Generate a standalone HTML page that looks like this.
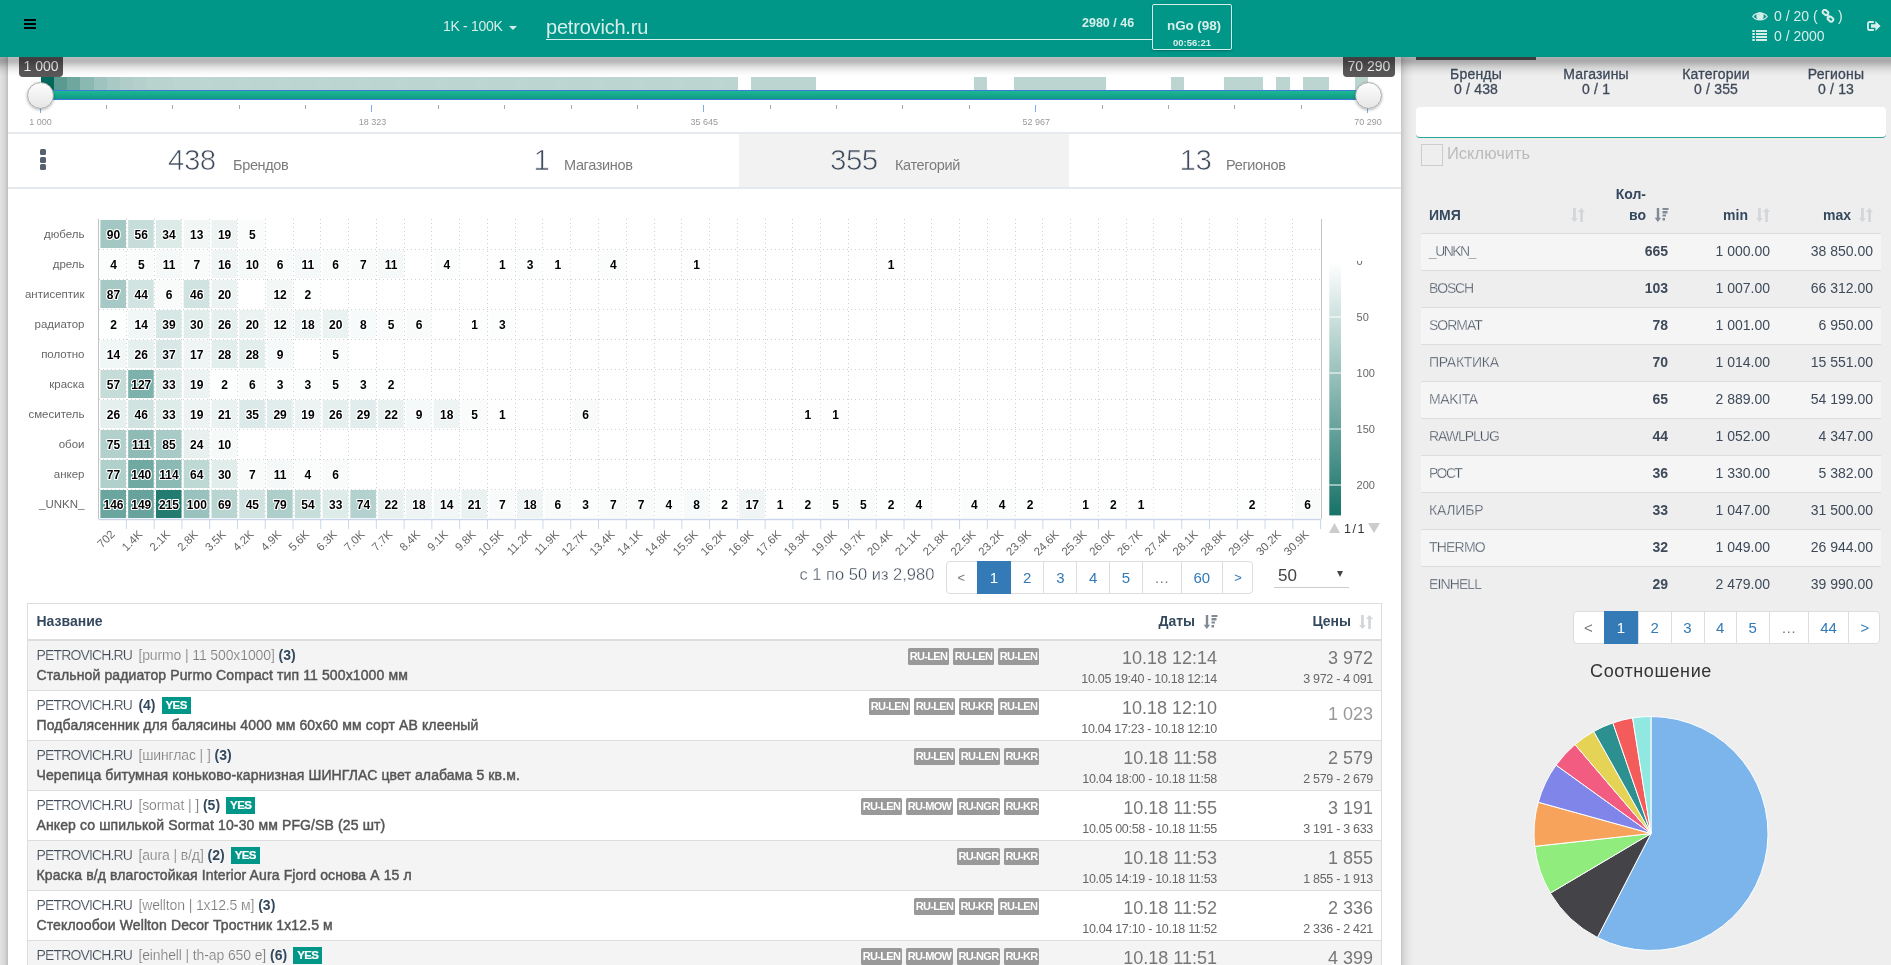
<!DOCTYPE html><html><head><meta charset="utf-8"><title>petrovich</title><style>
*{box-sizing:border-box;margin:0;padding:0}
html,body{width:1891px;height:965px;overflow:hidden}
body{font-family:"Liberation Sans",sans-serif;background:#eee;position:relative;color:#34495e}
.abs{position:absolute}
.nowrap{white-space:nowrap}
#leftstrip{position:absolute;left:0;top:0;width:8px;height:965px;background:linear-gradient(to right,#e2e2e2 0%,#d6d6d6 60%,#bdbdbd 100%)}
#main{position:absolute;left:8px;top:57px;width:1393px;height:908px;background:#fff;overflow:hidden;will-change:transform}
#side{position:absolute;left:1401px;top:57px;width:490px;height:908px;background:#eee;overflow:hidden;will-change:transform}
#sideshadow{position:absolute;left:0;top:0;width:13px;height:908px;background:linear-gradient(to right,#c6c6c6,#dcdcdc 30%,#e9e9e9 70%,#eee)}
#header{position:absolute;left:0;top:0;width:1891px;height:57px;background:#009688;z-index:10;will-change:transform}
#hshadow{position:absolute;left:0;top:57px;width:1891px;height:20px;z-index:9;background:linear-gradient(to bottom,rgba(0,0,0,0.26) 0px,rgba(0,0,0,0.29) 3px,rgba(0,0,0,0.27) 5px,rgba(0,0,0,0.18) 8px,rgba(0,0,0,0.10) 11px,rgba(0,0,0,0.035) 15px,rgba(0,0,0,0) 19px)}
.hw{color:#d6eee9}
</style></head><body>
<div id="leftstrip"></div>
<div id="header">
<div class="abs" style="left:24px;top:19px;width:12px;height:10px"><div class="abs" style="left:0;top:0;width:12px;height:2px;background:#000"></div><div class="abs" style="left:0;top:4px;width:12px;height:2px;background:#000"></div><div class="abs" style="left:0;top:8px;width:12px;height:2px;background:#000"></div></div>
<div class="abs nowrap hw" style="left:443px;top:18px;font-size:14px;line-height:17px;letter-spacing:-0.3px">1K - 100K</div>
<div class="abs" style="left:509px;top:26px;width:0;height:0;border-left:4px solid transparent;border-right:4px solid transparent;border-top:4px solid #d6eee9"></div>
<div class="abs nowrap hw" style="left:546px;top:15px;font-size:20px;line-height:24px;letter-spacing:-0.2px">petrovich.ru</div>
<div class="abs" style="left:546px;top:39px;width:606px;height:1px;background:#d7efea"></div>
<div class="abs nowrap hw" style="left:1082px;top:16px;font-size:12.5px;line-height:14px;font-weight:bold">2980 / 46</div>
<div class="abs" style="left:1152px;top:4px;width:80px;height:46px;border:1px solid #d6eee9;border-radius:2px;box-shadow:0 1px 2px rgba(0,0,0,0.25)"></div>
<div class="abs nowrap hw" style="left:1152px;top:18px;width:80px;text-align:center;font-size:13.5px;line-height:16px;font-weight:bold;letter-spacing:-0.1px;padding-left:4px">nGo (98)</div>
<div class="abs nowrap hw" style="left:1152px;top:37px;width:80px;text-align:center;font-size:9.5px;line-height:11px;font-weight:bold">00:56:21</div>
<svg class="abs" style="left:1752px;top:11px" width="16" height="11" viewBox="0 0 16 11"><path d="M0.8 5.5 C3.5 1 12.5 1 15.2 5.5 C12.5 10 3.5 10 0.8 5.5Z" fill="none" stroke="#d6eee9" stroke-width="1.3"/><circle cx="8" cy="5" r="3.7" fill="#d6eee9"/><circle cx="6.8" cy="3.6" r="0.9" fill="#b8dcd6"/></svg>
<div class="abs nowrap hw" style="left:1774px;top:8px;font-size:14px;line-height:16px">0 / 20 ( &nbsp;&nbsp;&nbsp;<span style="margin-left:1px"></span> )</div>
<svg class="abs" style="left:1821px;top:9px" width="14" height="14" viewBox="0 0 14 14"><g fill="none" stroke="#d6eee9" stroke-width="2"><rect x="1.5" y="1.5" width="6" height="4" rx="2" transform="rotate(40 4.5 3.5)"/><rect x="6.5" y="8" width="6" height="4" rx="2" transform="rotate(40 9.5 10)"/></g><path d="M5 5 L9 9" stroke="#d6eee9" stroke-width="1.6"/></svg>
<svg class="abs" style="left:1752px;top:30px" width="16" height="12" viewBox="0 0 16 12"><g fill="#d6eee9"><rect x="0.3" y="0" width="2.5" height="2"/><rect x="4" y="0" width="11" height="2"/><rect x="0.3" y="3" width="2.5" height="2"/><rect x="4" y="3" width="11" height="2"/><rect x="0.3" y="6" width="2.5" height="2"/><rect x="4" y="6" width="11" height="2"/><rect x="0.3" y="9" width="2.5" height="2"/><rect x="4" y="9" width="11" height="2"/></g></svg>
<div class="abs nowrap hw" style="left:1774px;top:28px;font-size:14px;line-height:16px">0 / 2000</div>
<svg class="abs" style="left:1867px;top:21px" width="14" height="10" viewBox="0 0 14 10"><path d="M6.8 1 H2.6 Q1 1 1 2.6 V7.4 Q1 9 2.6 9 H6.8" fill="none" stroke="#d6eee9" stroke-width="1.8"/><path d="M4 3.3 H8.4 V0 L13.6 5 L8.4 10 V6.7 H4Z" fill="#d6eee9"/></svg>
</div>
<div id="hshadow"></div>
<div id="main">
<div class="abs" style="left:33.00px;top:20px;width:13.45px;height:13px;background:#00695c"></div>
<div class="abs" style="left:46.15px;top:20px;width:13.45px;height:13px;background:#5b9a91"></div>
<div class="abs" style="left:59.30px;top:20px;width:13.45px;height:13px;background:#6fa69e"></div>
<div class="abs" style="left:72.45px;top:20px;width:13.45px;height:13px;background:#8cb8b2"></div>
<div class="abs" style="left:85.60px;top:20px;width:13.45px;height:13px;background:#9fc3be"></div>
<div class="abs" style="left:98.75px;top:20px;width:13.45px;height:13px;background:#a9c9c5"></div>
<div class="abs" style="left:111.90px;top:20px;width:13.45px;height:13px;background:#b0cdc9"></div>
<div class="abs" style="left:125.05px;top:20px;width:13.45px;height:13px;background:#b5d0cc"></div>
<div class="abs" style="left:138.20px;top:20px;width:13.45px;height:13px;background:#b8d2ce"></div>
<div class="abs" style="left:151.35px;top:20px;width:13.45px;height:13px;background:#bad3cf"></div>
<div class="abs" style="left:164.50px;top:20px;width:13.45px;height:13px;background:#bcd5d1"></div>
<div class="abs" style="left:177.65px;top:20px;width:13.45px;height:13px;background:#bcd5d1"></div>
<div class="abs" style="left:190.80px;top:20px;width:13.45px;height:13px;background:#bed6d2"></div>
<div class="abs" style="left:203.95px;top:20px;width:13.45px;height:13px;background:#bcd5d1"></div>
<div class="abs" style="left:217.10px;top:20px;width:13.45px;height:13px;background:#bcd5d1"></div>
<div class="abs" style="left:230.25px;top:20px;width:13.45px;height:13px;background:#bed6d2"></div>
<div class="abs" style="left:243.40px;top:20px;width:13.45px;height:13px;background:#bcd5d1"></div>
<div class="abs" style="left:256.55px;top:20px;width:13.45px;height:13px;background:#bcd5d1"></div>
<div class="abs" style="left:269.70px;top:20px;width:13.45px;height:13px;background:#bed6d2"></div>
<div class="abs" style="left:282.85px;top:20px;width:13.45px;height:13px;background:#bcd5d1"></div>
<div class="abs" style="left:296.00px;top:20px;width:13.45px;height:13px;background:#bcd5d1"></div>
<div class="abs" style="left:309.15px;top:20px;width:13.45px;height:13px;background:#bed6d2"></div>
<div class="abs" style="left:322.30px;top:20px;width:13.45px;height:13px;background:#bcd5d1"></div>
<div class="abs" style="left:335.45px;top:20px;width:13.45px;height:13px;background:#bcd5d1"></div>
<div class="abs" style="left:348.60px;top:20px;width:13.45px;height:13px;background:#bed6d2"></div>
<div class="abs" style="left:361.75px;top:20px;width:13.45px;height:13px;background:#bcd5d1"></div>
<div class="abs" style="left:374.90px;top:20px;width:13.45px;height:13px;background:#bcd5d1"></div>
<div class="abs" style="left:388.05px;top:20px;width:13.45px;height:13px;background:#bed6d2"></div>
<div class="abs" style="left:401.20px;top:20px;width:13.45px;height:13px;background:#bcd5d1"></div>
<div class="abs" style="left:414.35px;top:20px;width:13.45px;height:13px;background:#bcd5d1"></div>
<div class="abs" style="left:427.50px;top:20px;width:13.45px;height:13px;background:#bed6d2"></div>
<div class="abs" style="left:440.65px;top:20px;width:13.45px;height:13px;background:#bcd5d1"></div>
<div class="abs" style="left:453.80px;top:20px;width:13.45px;height:13px;background:#bcd5d1"></div>
<div class="abs" style="left:466.95px;top:20px;width:13.45px;height:13px;background:#bed6d2"></div>
<div class="abs" style="left:480.10px;top:20px;width:13.45px;height:13px;background:#bcd5d1"></div>
<div class="abs" style="left:493.25px;top:20px;width:13.45px;height:13px;background:#bcd5d1"></div>
<div class="abs" style="left:506.40px;top:20px;width:13.45px;height:13px;background:#bed6d2"></div>
<div class="abs" style="left:519.55px;top:20px;width:13.45px;height:13px;background:#bcd5d1"></div>
<div class="abs" style="left:532.70px;top:20px;width:13.45px;height:13px;background:#bcd5d1"></div>
<div class="abs" style="left:545.85px;top:20px;width:13.45px;height:13px;background:#bed6d2"></div>
<div class="abs" style="left:559.00px;top:20px;width:13.45px;height:13px;background:#bcd5d1"></div>
<div class="abs" style="left:572.15px;top:20px;width:13.45px;height:13px;background:#bcd5d1"></div>
<div class="abs" style="left:585.30px;top:20px;width:13.45px;height:13px;background:#bed6d2"></div>
<div class="abs" style="left:598.45px;top:20px;width:13.45px;height:13px;background:#bcd5d1"></div>
<div class="abs" style="left:611.60px;top:20px;width:13.45px;height:13px;background:#bcd5d1"></div>
<div class="abs" style="left:624.75px;top:20px;width:13.45px;height:13px;background:#bed6d2"></div>
<div class="abs" style="left:637.90px;top:20px;width:13.45px;height:13px;background:#bcd5d1"></div>
<div class="abs" style="left:651.05px;top:20px;width:13.45px;height:13px;background:#bcd5d1"></div>
<div class="abs" style="left:664.20px;top:20px;width:13.45px;height:13px;background:#bed6d2"></div>
<div class="abs" style="left:677.35px;top:20px;width:13.45px;height:13px;background:#bcd5d1"></div>
<div class="abs" style="left:690.50px;top:20px;width:13.45px;height:13px;background:#bcd5d1"></div>
<div class="abs" style="left:703.65px;top:20px;width:13.45px;height:13px;background:#bed6d2"></div>
<div class="abs" style="left:716.80px;top:20px;width:13.45px;height:13px;background:#bcd5d1"></div>
<div class="abs" style="left:743px;top:20px;width:65px;height:13px;background:#bcd5d1"></div>
<div class="abs" style="left:966px;top:20px;width:13px;height:13px;background:#bcd5d1"></div>
<div class="abs" style="left:1006px;top:20px;width:92px;height:13px;background:#bcd5d1"></div>
<div class="abs" style="left:1163px;top:20px;width:13px;height:13px;background:#bcd5d1"></div>
<div class="abs" style="left:1216px;top:20px;width:39px;height:13px;background:#bcd5d1"></div>
<div class="abs" style="left:1268px;top:20px;width:14px;height:13px;background:#bcd5d1"></div>
<div class="abs" style="left:1295px;top:20px;width:26px;height:13px;background:#bcd5d1"></div>
<div class="abs" style="left:1347px;top:20px;width:13px;height:13px;background:#bcd5d1"></div>
<div class="abs" style="left:32px;top:33px;width:1328px;height:10px;border-top:1px solid #3a7ad9;border-bottom:1px solid #3a7ad9;background:linear-gradient(to bottom,#1cb894,#0f9a86)"></div>
<div class="abs" style="left:32px;top:51px;width:1px;height:5px;background:#7eaaee"></div>
<div class="abs" style="left:98px;top:48px;width:1px;height:4px;background:#a8a8a8"></div>
<div class="abs" style="left:164px;top:48px;width:1px;height:4px;background:#a8a8a8"></div>
<div class="abs" style="left:231px;top:48px;width:1px;height:4px;background:#a8a8a8"></div>
<div class="abs" style="left:297px;top:48px;width:1px;height:4px;background:#a8a8a8"></div>
<div class="abs" style="left:363px;top:48px;width:1px;height:7px;background:#7eaaee"></div>
<div class="abs" style="left:430px;top:48px;width:1px;height:4px;background:#a8a8a8"></div>
<div class="abs" style="left:496px;top:48px;width:1px;height:4px;background:#a8a8a8"></div>
<div class="abs" style="left:563px;top:48px;width:1px;height:4px;background:#a8a8a8"></div>
<div class="abs" style="left:629px;top:48px;width:1px;height:4px;background:#a8a8a8"></div>
<div class="abs" style="left:695px;top:48px;width:1px;height:7px;background:#7eaaee"></div>
<div class="abs" style="left:762px;top:48px;width:1px;height:4px;background:#a8a8a8"></div>
<div class="abs" style="left:828px;top:48px;width:1px;height:4px;background:#a8a8a8"></div>
<div class="abs" style="left:894px;top:48px;width:1px;height:4px;background:#a8a8a8"></div>
<div class="abs" style="left:961px;top:48px;width:1px;height:4px;background:#a8a8a8"></div>
<div class="abs" style="left:1027px;top:48px;width:1px;height:7px;background:#7eaaee"></div>
<div class="abs" style="left:1094px;top:48px;width:1px;height:4px;background:#a8a8a8"></div>
<div class="abs" style="left:1160px;top:48px;width:1px;height:4px;background:#a8a8a8"></div>
<div class="abs" style="left:1226px;top:48px;width:1px;height:4px;background:#a8a8a8"></div>
<div class="abs" style="left:1293px;top:48px;width:1px;height:4px;background:#a8a8a8"></div>
<div class="abs" style="left:1359px;top:51px;width:1px;height:5px;background:#7eaaee"></div>
<div class="abs nowrap" style="left:-7.5px;top:60px;width:80px;text-align:center;font-size:9px;line-height:11px;color:#999">1 000</div>
<div class="abs nowrap" style="left:324.4px;top:60px;width:80px;text-align:center;font-size:9px;line-height:11px;color:#999">18 323</div>
<div class="abs nowrap" style="left:656.3px;top:60px;width:80px;text-align:center;font-size:9px;line-height:11px;color:#999">35 645</div>
<div class="abs nowrap" style="left:988.2px;top:60px;width:80px;text-align:center;font-size:9px;line-height:11px;color:#999">52 967</div>
<div class="abs nowrap" style="left:1320.1px;top:60px;width:80px;text-align:center;font-size:9px;line-height:11px;color:#999">70 290</div>
<div class="abs" style="left:19.0px;top:24.5px;width:27px;height:27px;border-radius:50%;border:1px solid #a8a8a8;background:linear-gradient(to bottom,#fdfdfd,#e6e6e6);box-shadow:0 1px 3px rgba(0,0,0,0.3)"></div>
<div class="abs" style="left:1347.0px;top:24.5px;width:27px;height:27px;border-radius:50%;border:1px solid #a8a8a8;background:linear-gradient(to bottom,#fdfdfd,#e6e6e6);box-shadow:0 1px 3px rgba(0,0,0,0.3)"></div>
<div class="abs nowrap" style="left:11px;top:-2px;width:44px;height:22px;border-radius:0 0 4px 4px;background:#5a5858;color:#fff;font-size:14px;line-height:22px;text-align:center;z-index:3">1 000</div>
<div class="abs nowrap" style="left:1335px;top:-2px;width:52px;height:22px;border-radius:0 0 4px 4px;background:#5a5858;color:#fff;font-size:14px;line-height:22px;text-align:center;z-index:3">70 290</div>
<div class="abs" style="left:0;top:75px;width:1393px;height:2px;background:#e6eaee"></div>
<div class="abs" style="left:0;top:130px;width:1393px;height:2px;background:#e6eaee"></div>
<div class="abs" style="left:731px;top:77px;width:330px;height:53px;background:#f2f2f2"></div>
<div class="abs" style="left:32px;top:92.0px;width:6px;height:6px;border-radius:1.5px;background:#56606e"></div>
<div class="abs" style="left:32px;top:99.6px;width:6px;height:6px;border-radius:1.5px;background:#56606e"></div>
<div class="abs" style="left:32px;top:107.2px;width:6px;height:6px;border-radius:1.5px;background:#56606e"></div>
<div class="abs nowrap" style="left:160px;top:86px;font-size:29.5px;line-height:34px;color:#3f4b5c;letter-spacing:-0.5px;-webkit-text-stroke:0.7px #fff">438</div>
<div class="abs nowrap" style="left:225px;top:100px;font-size:14.5px;line-height:17px;color:#7b7b7b;letter-spacing:-0.35px">Брендов</div>
<div class="abs nowrap" style="left:525.5px;top:86px;font-size:29.5px;line-height:34px;color:#3f4b5c;letter-spacing:-0.5px;-webkit-text-stroke:0.7px #fff">1</div>
<div class="abs nowrap" style="left:556px;top:100px;font-size:14.5px;line-height:17px;color:#7b7b7b;letter-spacing:-0.35px">Магазинов</div>
<div class="abs nowrap" style="left:822px;top:86px;font-size:29.5px;line-height:34px;color:#3f4b5c;letter-spacing:-0.5px;-webkit-text-stroke:0.7px #f2f2f2">355</div>
<div class="abs nowrap" style="left:887px;top:100px;font-size:14.5px;line-height:17px;color:#7b7b7b;letter-spacing:-0.35px">Категорий</div>
<div class="abs nowrap" style="left:1171.5px;top:86px;font-size:29.5px;line-height:34px;color:#3f4b5c;letter-spacing:-0.5px;-webkit-text-stroke:0.7px #fff">13</div>
<div class="abs nowrap" style="left:1218px;top:100px;font-size:14.5px;line-height:17px;color:#7b7b7b;letter-spacing:-0.35px">Регионов</div>
<svg class="abs" style="left:-8px;top:-57px" width="1400" height="965" viewBox="0 0 1400 965">
<path d="M126.5 219.0 V519.0 M154.5 219.0 V519.0 M181.5 219.0 V519.0 M209.5 219.0 V519.0 M237.5 219.0 V519.0 M265.5 219.0 V519.0 M293.5 219.0 V519.0 M320.5 219.0 V519.0 M348.5 219.0 V519.0 M376.5 219.0 V519.0 M404.5 219.0 V519.0 M431.5 219.0 V519.0 M459.5 219.0 V519.0 M487.5 219.0 V519.0 M515.5 219.0 V519.0 M542.5 219.0 V519.0 M570.5 219.0 V519.0 M598.5 219.0 V519.0 M626.5 219.0 V519.0 M654.5 219.0 V519.0 M681.5 219.0 V519.0 M709.5 219.0 V519.0 M737.5 219.0 V519.0 M765.5 219.0 V519.0 M792.5 219.0 V519.0 M820.5 219.0 V519.0 M848.5 219.0 V519.0 M876.5 219.0 V519.0 M904.5 219.0 V519.0 M931.5 219.0 V519.0 M959.5 219.0 V519.0 M987.5 219.0 V519.0 M1015.5 219.0 V519.0 M1042.5 219.0 V519.0 M1070.5 219.0 V519.0 M1098.5 219.0 V519.0 M1126.5 219.0 V519.0 M1153.5 219.0 V519.0 M1181.5 219.0 V519.0 M1209.5 219.0 V519.0 M1237.5 219.0 V519.0 M1265.5 219.0 V519.0 M1292.5 219.0 V519.0 M99 249.5 H1320.6 M99 279.5 H1320.6 M99 309.5 H1320.6 M99 339.5 H1320.6 M99 369.5 H1320.6 M99 399.5 H1320.6 M99 429.5 H1320.6 M99 459.5 H1320.6 M99 489.5 H1320.6" stroke="#d0d0d0" stroke-width="1" stroke-dasharray="1,3" fill="none" shape-rendering="crispEdges"/>
<rect x="100.40" y="220.00" width="25.57" height="28.00" fill="#a3c8c3"/>
<rect x="128.17" y="220.00" width="25.57" height="28.00" fill="#c6ddda"/>
<rect x="155.95" y="220.00" width="25.57" height="28.00" fill="#dceae8"/>
<rect x="183.72" y="220.00" width="25.57" height="28.00" fill="#f2f7f6"/>
<rect x="211.49" y="220.00" width="25.57" height="28.00" fill="#ecf3f2"/>
<rect x="239.26" y="220.00" width="25.57" height="28.00" fill="#fafcfc"/>
<rect x="100.40" y="250.00" width="25.57" height="28.00" fill="#fbfdfc"/>
<rect x="128.17" y="250.00" width="25.57" height="28.00" fill="#fafcfc"/>
<rect x="155.95" y="250.00" width="25.57" height="28.00" fill="#f4f8f8"/>
<rect x="183.72" y="250.00" width="25.57" height="28.00" fill="#f8fbfa"/>
<rect x="211.49" y="250.00" width="25.57" height="28.00" fill="#eff5f4"/>
<rect x="239.26" y="250.00" width="25.57" height="28.00" fill="#f5f9f8"/>
<rect x="267.04" y="250.00" width="25.57" height="28.00" fill="#f9fbfb"/>
<rect x="294.81" y="250.00" width="25.57" height="28.00" fill="#f4f8f8"/>
<rect x="322.58" y="250.00" width="25.57" height="28.00" fill="#f9fbfb"/>
<rect x="350.35" y="250.00" width="25.57" height="28.00" fill="#f8fbfa"/>
<rect x="378.13" y="250.00" width="25.57" height="28.00" fill="#f4f8f8"/>
<rect x="433.67" y="250.00" width="25.57" height="28.00" fill="#fbfdfc"/>
<rect x="489.22" y="250.00" width="25.57" height="28.00" fill="#fefefe"/>
<rect x="516.99" y="250.00" width="25.57" height="28.00" fill="#fcfdfd"/>
<rect x="544.76" y="250.00" width="25.57" height="28.00" fill="#fefefe"/>
<rect x="600.31" y="250.00" width="25.57" height="28.00" fill="#fbfdfc"/>
<rect x="683.63" y="250.00" width="25.57" height="28.00" fill="#fefefe"/>
<rect x="878.04" y="250.00" width="25.57" height="28.00" fill="#fefefe"/>
<rect x="100.40" y="280.00" width="25.57" height="28.00" fill="#a6c9c5"/>
<rect x="128.17" y="280.00" width="25.57" height="28.00" fill="#d2e4e2"/>
<rect x="155.95" y="280.00" width="25.57" height="28.00" fill="#f9fbfb"/>
<rect x="183.72" y="280.00" width="25.57" height="28.00" fill="#d0e3e0"/>
<rect x="211.49" y="280.00" width="25.57" height="28.00" fill="#ebf3f2"/>
<rect x="267.04" y="280.00" width="25.57" height="28.00" fill="#f3f8f7"/>
<rect x="294.81" y="280.00" width="25.57" height="28.00" fill="#fdfefe"/>
<rect x="100.40" y="310.00" width="25.57" height="28.00" fill="#fdfefe"/>
<rect x="128.17" y="310.00" width="25.57" height="28.00" fill="#f1f6f6"/>
<rect x="155.95" y="310.00" width="25.57" height="28.00" fill="#d7e7e5"/>
<rect x="183.72" y="310.00" width="25.57" height="28.00" fill="#e0edeb"/>
<rect x="211.49" y="310.00" width="25.57" height="28.00" fill="#e4efee"/>
<rect x="239.26" y="310.00" width="25.57" height="28.00" fill="#ebf3f2"/>
<rect x="267.04" y="310.00" width="25.57" height="28.00" fill="#f3f8f7"/>
<rect x="294.81" y="310.00" width="25.57" height="28.00" fill="#edf4f3"/>
<rect x="322.58" y="310.00" width="25.57" height="28.00" fill="#ebf3f2"/>
<rect x="350.35" y="310.00" width="25.57" height="28.00" fill="#f7fafa"/>
<rect x="378.13" y="310.00" width="25.57" height="28.00" fill="#fafcfc"/>
<rect x="405.90" y="310.00" width="25.57" height="28.00" fill="#f9fbfb"/>
<rect x="461.45" y="310.00" width="25.57" height="28.00" fill="#fefefe"/>
<rect x="489.22" y="310.00" width="25.57" height="28.00" fill="#fcfdfd"/>
<rect x="100.40" y="340.00" width="25.57" height="28.00" fill="#f1f6f6"/>
<rect x="128.17" y="340.00" width="25.57" height="28.00" fill="#e4efee"/>
<rect x="155.95" y="340.00" width="25.57" height="28.00" fill="#d9e8e6"/>
<rect x="183.72" y="340.00" width="25.57" height="28.00" fill="#eef5f4"/>
<rect x="211.49" y="340.00" width="25.57" height="28.00" fill="#e2eeec"/>
<rect x="239.26" y="340.00" width="25.57" height="28.00" fill="#e2eeec"/>
<rect x="267.04" y="340.00" width="25.57" height="28.00" fill="#f6f9f9"/>
<rect x="322.58" y="340.00" width="25.57" height="28.00" fill="#fafcfc"/>
<rect x="100.40" y="370.00" width="25.57" height="28.00" fill="#c5dcd9"/>
<rect x="128.17" y="370.00" width="25.57" height="28.00" fill="#7db1ab"/>
<rect x="155.95" y="370.00" width="25.57" height="28.00" fill="#ddebe9"/>
<rect x="183.72" y="370.00" width="25.57" height="28.00" fill="#ecf3f2"/>
<rect x="211.49" y="370.00" width="25.57" height="28.00" fill="#fdfefe"/>
<rect x="239.26" y="370.00" width="25.57" height="28.00" fill="#f9fbfb"/>
<rect x="267.04" y="370.00" width="25.57" height="28.00" fill="#fcfdfd"/>
<rect x="294.81" y="370.00" width="25.57" height="28.00" fill="#fcfdfd"/>
<rect x="322.58" y="370.00" width="25.57" height="28.00" fill="#fafcfc"/>
<rect x="350.35" y="370.00" width="25.57" height="28.00" fill="#fcfdfd"/>
<rect x="378.13" y="370.00" width="25.57" height="28.00" fill="#fdfefe"/>
<rect x="100.40" y="400.00" width="25.57" height="28.00" fill="#e4efee"/>
<rect x="128.17" y="400.00" width="25.57" height="28.00" fill="#d0e3e0"/>
<rect x="155.95" y="400.00" width="25.57" height="28.00" fill="#ddebe9"/>
<rect x="183.72" y="400.00" width="25.57" height="28.00" fill="#ecf3f2"/>
<rect x="211.49" y="400.00" width="25.57" height="28.00" fill="#eaf2f1"/>
<rect x="239.26" y="400.00" width="25.57" height="28.00" fill="#dbe9e8"/>
<rect x="267.04" y="400.00" width="25.57" height="28.00" fill="#e1edec"/>
<rect x="294.81" y="400.00" width="25.57" height="28.00" fill="#ecf3f2"/>
<rect x="322.58" y="400.00" width="25.57" height="28.00" fill="#e4efee"/>
<rect x="350.35" y="400.00" width="25.57" height="28.00" fill="#e1edec"/>
<rect x="378.13" y="400.00" width="25.57" height="28.00" fill="#e9f1f0"/>
<rect x="405.90" y="400.00" width="25.57" height="28.00" fill="#f6f9f9"/>
<rect x="433.67" y="400.00" width="25.57" height="28.00" fill="#edf4f3"/>
<rect x="461.45" y="400.00" width="25.57" height="28.00" fill="#fafcfc"/>
<rect x="489.22" y="400.00" width="25.57" height="28.00" fill="#fefefe"/>
<rect x="572.54" y="400.00" width="25.57" height="28.00" fill="#f9fbfb"/>
<rect x="794.72" y="400.00" width="25.57" height="28.00" fill="#fefefe"/>
<rect x="822.49" y="400.00" width="25.57" height="28.00" fill="#fefefe"/>
<rect x="100.40" y="430.00" width="25.57" height="28.00" fill="#b2d1cd"/>
<rect x="128.17" y="430.00" width="25.57" height="28.00" fill="#8ebbb5"/>
<rect x="155.95" y="430.00" width="25.57" height="28.00" fill="#a8cbc7"/>
<rect x="183.72" y="430.00" width="25.57" height="28.00" fill="#e7f0ef"/>
<rect x="211.49" y="430.00" width="25.57" height="28.00" fill="#f5f9f8"/>
<rect x="100.40" y="460.00" width="25.57" height="28.00" fill="#b0d0cc"/>
<rect x="128.17" y="460.00" width="25.57" height="28.00" fill="#70a9a2"/>
<rect x="155.95" y="460.00" width="25.57" height="28.00" fill="#8bb9b3"/>
<rect x="183.72" y="460.00" width="25.57" height="28.00" fill="#bed8d4"/>
<rect x="211.49" y="460.00" width="25.57" height="28.00" fill="#e0edeb"/>
<rect x="239.26" y="460.00" width="25.57" height="28.00" fill="#f8fbfa"/>
<rect x="267.04" y="460.00" width="25.57" height="28.00" fill="#f4f8f8"/>
<rect x="294.81" y="460.00" width="25.57" height="28.00" fill="#fbfdfc"/>
<rect x="322.58" y="460.00" width="25.57" height="28.00" fill="#f9fbfb"/>
<rect x="100.40" y="490.00" width="25.57" height="28.00" fill="#6aa59e"/>
<rect x="128.17" y="490.00" width="25.57" height="28.00" fill="#67a39c"/>
<rect x="155.95" y="490.00" width="25.57" height="28.00" fill="#247b70"/>
<rect x="183.72" y="490.00" width="25.57" height="28.00" fill="#99c1bd"/>
<rect x="211.49" y="490.00" width="25.57" height="28.00" fill="#b9d5d1"/>
<rect x="239.26" y="490.00" width="25.57" height="28.00" fill="#d1e3e1"/>
<rect x="267.04" y="490.00" width="25.57" height="28.00" fill="#aececb"/>
<rect x="294.81" y="490.00" width="25.57" height="28.00" fill="#c8dedb"/>
<rect x="322.58" y="490.00" width="25.57" height="28.00" fill="#ddebe9"/>
<rect x="350.35" y="490.00" width="25.57" height="28.00" fill="#b3d1ce"/>
<rect x="378.13" y="490.00" width="25.57" height="28.00" fill="#e9f1f0"/>
<rect x="405.90" y="490.00" width="25.57" height="28.00" fill="#edf4f3"/>
<rect x="433.67" y="490.00" width="25.57" height="28.00" fill="#f1f6f6"/>
<rect x="461.45" y="490.00" width="25.57" height="28.00" fill="#eaf2f1"/>
<rect x="489.22" y="490.00" width="25.57" height="28.00" fill="#f8fbfa"/>
<rect x="516.99" y="490.00" width="25.57" height="28.00" fill="#edf4f3"/>
<rect x="544.76" y="490.00" width="25.57" height="28.00" fill="#f9fbfb"/>
<rect x="572.54" y="490.00" width="25.57" height="28.00" fill="#fcfdfd"/>
<rect x="600.31" y="490.00" width="25.57" height="28.00" fill="#f8fbfa"/>
<rect x="628.08" y="490.00" width="25.57" height="28.00" fill="#f8fbfa"/>
<rect x="655.85" y="490.00" width="25.57" height="28.00" fill="#fbfdfc"/>
<rect x="683.63" y="490.00" width="25.57" height="28.00" fill="#f7fafa"/>
<rect x="711.40" y="490.00" width="25.57" height="28.00" fill="#fdfefe"/>
<rect x="739.17" y="490.00" width="25.57" height="28.00" fill="#eef5f4"/>
<rect x="766.95" y="490.00" width="25.57" height="28.00" fill="#fefefe"/>
<rect x="794.72" y="490.00" width="25.57" height="28.00" fill="#fdfefe"/>
<rect x="822.49" y="490.00" width="25.57" height="28.00" fill="#fafcfc"/>
<rect x="850.26" y="490.00" width="25.57" height="28.00" fill="#fafcfc"/>
<rect x="878.04" y="490.00" width="25.57" height="28.00" fill="#fdfefe"/>
<rect x="905.81" y="490.00" width="25.57" height="28.00" fill="#fbfdfc"/>
<rect x="961.35" y="490.00" width="25.57" height="28.00" fill="#fbfdfc"/>
<rect x="989.13" y="490.00" width="25.57" height="28.00" fill="#fbfdfc"/>
<rect x="1016.90" y="490.00" width="25.57" height="28.00" fill="#fdfefe"/>
<rect x="1072.45" y="490.00" width="25.57" height="28.00" fill="#fefefe"/>
<rect x="1100.22" y="490.00" width="25.57" height="28.00" fill="#fdfefe"/>
<rect x="1127.99" y="490.00" width="25.57" height="28.00" fill="#fefefe"/>
<rect x="1239.08" y="490.00" width="25.57" height="28.00" fill="#fdfefe"/>
<rect x="1294.63" y="490.00" width="25.57" height="28.00" fill="#f9fbfb"/>
<path d="M98.5 219.0 V519.0" stroke="#c4c4c4" stroke-width="1" shape-rendering="crispEdges"/>
<path d="M1321.5 219.0 V519.0" stroke="#c4c4c4" stroke-width="1" shape-rendering="crispEdges"/>
<path d="M98.6 519.5 H1320.6" stroke="#ccd6eb" stroke-width="1.5"/>
<path d="M126.37 519.0 V529.0 M154.15 519.0 V529.0 M181.92 519.0 V529.0 M209.69 519.0 V529.0 M237.46 519.0 V529.0 M265.24 519.0 V529.0 M293.01 519.0 V529.0 M320.78 519.0 V529.0 M348.55 519.0 V529.0 M376.33 519.0 V529.0 M404.10 519.0 V529.0 M431.87 519.0 V529.0 M459.65 519.0 V529.0 M487.42 519.0 V529.0 M515.19 519.0 V529.0 M542.96 519.0 V529.0 M570.74 519.0 V529.0 M598.51 519.0 V529.0 M626.28 519.0 V529.0 M654.05 519.0 V529.0 M681.83 519.0 V529.0 M709.60 519.0 V529.0 M737.37 519.0 V529.0 M765.15 519.0 V529.0 M792.92 519.0 V529.0 M820.69 519.0 V529.0 M848.46 519.0 V529.0 M876.24 519.0 V529.0 M904.01 519.0 V529.0 M931.78 519.0 V529.0 M959.55 519.0 V529.0 M987.33 519.0 V529.0 M1015.10 519.0 V529.0 M1042.87 519.0 V529.0 M1070.65 519.0 V529.0 M1098.42 519.0 V529.0 M1126.19 519.0 V529.0 M1153.96 519.0 V529.0 M1181.74 519.0 V529.0 M1209.51 519.0 V529.0 M1237.28 519.0 V529.0 M1265.05 519.0 V529.0 M1292.83 519.0 V529.0 M1320.60 519.0 V529.0" stroke="#ccd6eb" stroke-width="1"/>
<g font-family="Liberation Sans" font-size="12" font-weight="bold" text-anchor="middle" fill="#000" stroke="#fff" stroke-width="2.2" stroke-linejoin="round" paint-order="stroke">
<text x="113.49" y="238.60">90</text>
<text x="141.26" y="238.60">56</text>
<text x="169.03" y="238.60">34</text>
<text x="196.80" y="238.60">13</text>
<text x="224.58" y="238.60">19</text>
<text x="252.35" y="238.60">5</text>
<text x="113.49" y="268.60">4</text>
<text x="141.26" y="268.60">5</text>
<text x="169.03" y="268.60">11</text>
<text x="196.80" y="268.60">7</text>
<text x="224.58" y="268.60">16</text>
<text x="252.35" y="268.60">10</text>
<text x="280.12" y="268.60">6</text>
<text x="307.90" y="268.60">11</text>
<text x="335.67" y="268.60">6</text>
<text x="363.44" y="268.60">7</text>
<text x="391.21" y="268.60">11</text>
<text x="446.76" y="268.60">4</text>
<text x="502.30" y="268.60">1</text>
<text x="530.08" y="268.60">3</text>
<text x="557.85" y="268.60">1</text>
<text x="613.40" y="268.60">4</text>
<text x="696.71" y="268.60">1</text>
<text x="891.12" y="268.60">1</text>
<text x="113.49" y="298.60">87</text>
<text x="141.26" y="298.60">44</text>
<text x="169.03" y="298.60">6</text>
<text x="196.80" y="298.60">46</text>
<text x="224.58" y="298.60">20</text>
<text x="280.12" y="298.60">12</text>
<text x="307.90" y="298.60">2</text>
<text x="113.49" y="328.60">2</text>
<text x="141.26" y="328.60">14</text>
<text x="169.03" y="328.60">39</text>
<text x="196.80" y="328.60">30</text>
<text x="224.58" y="328.60">26</text>
<text x="252.35" y="328.60">20</text>
<text x="280.12" y="328.60">12</text>
<text x="307.90" y="328.60">18</text>
<text x="335.67" y="328.60">20</text>
<text x="363.44" y="328.60">8</text>
<text x="391.21" y="328.60">5</text>
<text x="418.99" y="328.60">6</text>
<text x="474.53" y="328.60">1</text>
<text x="502.30" y="328.60">3</text>
<text x="113.49" y="358.60">14</text>
<text x="141.26" y="358.60">26</text>
<text x="169.03" y="358.60">37</text>
<text x="196.80" y="358.60">17</text>
<text x="224.58" y="358.60">28</text>
<text x="252.35" y="358.60">28</text>
<text x="280.12" y="358.60">9</text>
<text x="335.67" y="358.60">5</text>
<text x="113.49" y="388.60">57</text>
<text x="141.26" y="388.60">127</text>
<text x="169.03" y="388.60">33</text>
<text x="196.80" y="388.60">19</text>
<text x="224.58" y="388.60">2</text>
<text x="252.35" y="388.60">6</text>
<text x="280.12" y="388.60">3</text>
<text x="307.90" y="388.60">3</text>
<text x="335.67" y="388.60">5</text>
<text x="363.44" y="388.60">3</text>
<text x="391.21" y="388.60">2</text>
<text x="113.49" y="418.60">26</text>
<text x="141.26" y="418.60">46</text>
<text x="169.03" y="418.60">33</text>
<text x="196.80" y="418.60">19</text>
<text x="224.58" y="418.60">21</text>
<text x="252.35" y="418.60">35</text>
<text x="280.12" y="418.60">29</text>
<text x="307.90" y="418.60">19</text>
<text x="335.67" y="418.60">26</text>
<text x="363.44" y="418.60">29</text>
<text x="391.21" y="418.60">22</text>
<text x="418.99" y="418.60">9</text>
<text x="446.76" y="418.60">18</text>
<text x="474.53" y="418.60">5</text>
<text x="502.30" y="418.60">1</text>
<text x="585.62" y="418.60">6</text>
<text x="807.80" y="418.60">1</text>
<text x="835.58" y="418.60">1</text>
<text x="113.49" y="448.60">75</text>
<text x="141.26" y="448.60">111</text>
<text x="169.03" y="448.60">85</text>
<text x="196.80" y="448.60">24</text>
<text x="224.58" y="448.60">10</text>
<text x="113.49" y="478.60">77</text>
<text x="141.26" y="478.60">140</text>
<text x="169.03" y="478.60">114</text>
<text x="196.80" y="478.60">64</text>
<text x="224.58" y="478.60">30</text>
<text x="252.35" y="478.60">7</text>
<text x="280.12" y="478.60">11</text>
<text x="307.90" y="478.60">4</text>
<text x="335.67" y="478.60">6</text>
<text x="113.49" y="508.60">146</text>
<text x="141.26" y="508.60">149</text>
<text x="169.03" y="508.60">215</text>
<text x="196.80" y="508.60">100</text>
<text x="224.58" y="508.60">69</text>
<text x="252.35" y="508.60">45</text>
<text x="280.12" y="508.60">79</text>
<text x="307.90" y="508.60">54</text>
<text x="335.67" y="508.60">33</text>
<text x="363.44" y="508.60">74</text>
<text x="391.21" y="508.60">22</text>
<text x="418.99" y="508.60">18</text>
<text x="446.76" y="508.60">14</text>
<text x="474.53" y="508.60">21</text>
<text x="502.30" y="508.60">7</text>
<text x="530.08" y="508.60">18</text>
<text x="557.85" y="508.60">6</text>
<text x="585.62" y="508.60">3</text>
<text x="613.40" y="508.60">7</text>
<text x="641.17" y="508.60">7</text>
<text x="668.94" y="508.60">4</text>
<text x="696.71" y="508.60">8</text>
<text x="724.49" y="508.60">2</text>
<text x="752.26" y="508.60">17</text>
<text x="780.03" y="508.60">1</text>
<text x="807.80" y="508.60">2</text>
<text x="835.58" y="508.60">5</text>
<text x="863.35" y="508.60">5</text>
<text x="891.12" y="508.60">2</text>
<text x="918.90" y="508.60">4</text>
<text x="974.44" y="508.60">4</text>
<text x="1002.21" y="508.60">4</text>
<text x="1029.99" y="508.60">2</text>
<text x="1085.53" y="508.60">1</text>
<text x="1113.30" y="508.60">2</text>
<text x="1141.08" y="508.60">1</text>
<text x="1252.17" y="508.60">2</text>
<text x="1307.71" y="508.60">6</text>
</g>
<g font-family="Liberation Sans" font-size="11.5" fill="#666" text-anchor="end">
<text x="84.5" y="238.00">дюбель</text>
<text x="84.5" y="268.00">дрель</text>
<text x="84.5" y="298.00">антисептик</text>
<text x="84.5" y="328.00">радиатор</text>
<text x="84.5" y="358.00">полотно</text>
<text x="84.5" y="388.00">краска</text>
<text x="84.5" y="418.00">смеситель</text>
<text x="84.5" y="448.00">обои</text>
<text x="84.5" y="478.00">анкер</text>
<text x="84.5" y="508.00">_UNKN_</text>
</g>
<g font-family="Liberation Sans" font-size="11.5" fill="#666" text-anchor="end">
<text transform="translate(115.49 535) rotate(-45)">702</text>
<text transform="translate(143.26 535) rotate(-45)">1.4K</text>
<text transform="translate(171.03 535) rotate(-45)">2.1K</text>
<text transform="translate(198.80 535) rotate(-45)">2.8K</text>
<text transform="translate(226.58 535) rotate(-45)">3.5K</text>
<text transform="translate(254.35 535) rotate(-45)">4.2K</text>
<text transform="translate(282.12 535) rotate(-45)">4.9K</text>
<text transform="translate(309.90 535) rotate(-45)">5.6K</text>
<text transform="translate(337.67 535) rotate(-45)">6.3K</text>
<text transform="translate(365.44 535) rotate(-45)">7.0K</text>
<text transform="translate(393.21 535) rotate(-45)">7.7K</text>
<text transform="translate(420.99 535) rotate(-45)">8.4K</text>
<text transform="translate(448.76 535) rotate(-45)">9.1K</text>
<text transform="translate(476.53 535) rotate(-45)">9.8K</text>
<text transform="translate(504.30 535) rotate(-45)">10.5K</text>
<text transform="translate(532.08 535) rotate(-45)">11.2K</text>
<text transform="translate(559.85 535) rotate(-45)">11.9K</text>
<text transform="translate(587.62 535) rotate(-45)">12.7K</text>
<text transform="translate(615.40 535) rotate(-45)">13.4K</text>
<text transform="translate(643.17 535) rotate(-45)">14.1K</text>
<text transform="translate(670.94 535) rotate(-45)">14.8K</text>
<text transform="translate(698.71 535) rotate(-45)">15.5K</text>
<text transform="translate(726.49 535) rotate(-45)">16.2K</text>
<text transform="translate(754.26 535) rotate(-45)">16.9K</text>
<text transform="translate(782.03 535) rotate(-45)">17.6K</text>
<text transform="translate(809.80 535) rotate(-45)">18.3K</text>
<text transform="translate(837.58 535) rotate(-45)">19.0K</text>
<text transform="translate(865.35 535) rotate(-45)">19.7K</text>
<text transform="translate(893.12 535) rotate(-45)">20.4K</text>
<text transform="translate(920.90 535) rotate(-45)">21.1K</text>
<text transform="translate(948.67 535) rotate(-45)">21.8K</text>
<text transform="translate(976.44 535) rotate(-45)">22.5K</text>
<text transform="translate(1004.21 535) rotate(-45)">23.2K</text>
<text transform="translate(1031.99 535) rotate(-45)">23.9K</text>
<text transform="translate(1059.76 535) rotate(-45)">24.6K</text>
<text transform="translate(1087.53 535) rotate(-45)">25.3K</text>
<text transform="translate(1115.30 535) rotate(-45)">26.0K</text>
<text transform="translate(1143.08 535) rotate(-45)">26.7K</text>
<text transform="translate(1170.85 535) rotate(-45)">27.4K</text>
<text transform="translate(1198.62 535) rotate(-45)">28.1K</text>
<text transform="translate(1226.40 535) rotate(-45)">28.8K</text>
<text transform="translate(1254.17 535) rotate(-45)">29.5K</text>
<text transform="translate(1281.94 535) rotate(-45)">30.2K</text>
<text transform="translate(1309.71 535) rotate(-45)">30.9K</text>
</g>
<defs><linearGradient id="lg" x1="0" y1="0" x2="0" y2="1"><stop offset="0" stop-color="#ffffff"/><stop offset="1" stop-color="#177368"/></linearGradient></defs>
<rect x="1329.3" y="262" width="11.7" height="253.4" fill="url(#lg)"/>
<path d="M1329.3 317 H1341" stroke="#fff" stroke-width="1"/>
<path d="M1329.3 373 H1341" stroke="#fff" stroke-width="1"/>
<path d="M1329.3 429 H1341" stroke="#fff" stroke-width="1"/>
<path d="M1329.3 485 H1341" stroke="#fff" stroke-width="1"/>
<g font-family="Liberation Sans" font-size="11" fill="#666">
<text x="1356.6" y="321">50</text>
<text x="1356.6" y="377">100</text>
<text x="1356.6" y="433">150</text>
<text x="1356.6" y="489">200</text>
</g>
<defs><clipPath id="c0"><rect x="1340" y="261" width="40" height="20"/></clipPath></defs>
<text x="1356.6" y="265" font-family="Liberation Sans" font-size="11" fill="#666" clip-path="url(#c0)">0</text>
<path d="M1329 533 L1334.5 523 L1340 533Z" fill="#ccc"/>
<text x="1344" y="533" font-family="Liberation Sans" font-size="12.5" fill="#333" letter-spacing="1.6">1/1</text>
<path d="M1368 523 L1374 533 L1380 523Z" fill="#ccc"/>
</svg>
<div class="abs nowrap" style="left:791.5px;top:507px;font-size:16.5px;line-height:20px;color:#3a4555;letter-spacing:0px;-webkit-text-stroke:0.35px #fff">с 1 по 50 из 2,980</div>
<div class="abs" style="left:937.6px;top:504.29999999999995px;width:307.80000000000007px;height:33px;border:1px solid #ddd;border-radius:4px;background:#fff"></div>
<div class="abs nowrap" style="left:937.6px;top:504.29999999999995px;width:31.4px;height:33px;color:#777;font-size:13px;line-height:33px;text-align:center">&lt;</div>
<div class="abs nowrap" style="left:969.0px;top:504.29999999999995px;width:33.8px;height:33px;background:#337ab7;color:#fff;font-size:15px;line-height:33px;text-align:center">1</div>
<div class="abs nowrap" style="left:1002.8px;top:504.29999999999995px;width:32.6px;height:33px;color:#337ab7;font-size:15px;line-height:33px;text-align:center">2</div>
<div class="abs nowrap" style="left:1035.4px;top:504.29999999999995px;width:32.9px;height:33px;border-left:1px solid #ddd;color:#337ab7;font-size:15px;line-height:33px;text-align:center">3</div>
<div class="abs nowrap" style="left:1068.3px;top:504.29999999999995px;width:32.9px;height:33px;border-left:1px solid #ddd;color:#337ab7;font-size:15px;line-height:33px;text-align:center">4</div>
<div class="abs nowrap" style="left:1101.2px;top:504.29999999999995px;width:32.4px;height:33px;border-left:1px solid #ddd;color:#337ab7;font-size:15px;line-height:33px;text-align:center">5</div>
<div class="abs nowrap" style="left:1133.6px;top:504.29999999999995px;width:39.2px;height:33px;border-left:1px solid #ddd;color:#777;font-size:15px;line-height:33px;text-align:center">…</div>
<div class="abs nowrap" style="left:1172.8px;top:504.29999999999995px;width:40.9px;height:33px;border-left:1px solid #ddd;color:#337ab7;font-size:15px;line-height:33px;text-align:center">60</div>
<div class="abs nowrap" style="left:1213.7px;top:504.29999999999995px;width:31.7px;height:33px;border-left:1px solid #ddd;color:#337ab7;font-size:13px;line-height:33px;text-align:center">&gt;</div>
<div class="abs nowrap" style="left:1270px;top:509px;font-size:17px;line-height:20px;color:#444">50</div>
<div class="abs" style="left:1329px;top:514px;width:0;height:0;border-left:3px solid transparent;border-right:3px solid transparent;border-top:6px solid #444"></div>
<div class="abs" style="left:1266px;top:530px;width:75px;height:1px;background:#ccc"></div>
<div class="abs" style="left:19.0px;top:546.0px;width:1355.0px;height:367.0px;border:1px solid #ddd;border-bottom:none;background:#fff"></div>
<div class="abs" style="left:19.0px;top:582.2px;width:1354.4px;height:2px;background:#ddd"></div>
<div class="abs nowrap" style="left:28.5px;top:556.0px;font-size:14px;line-height:17px;font-weight:bold;color:#34495e">Название</div>
<div class="abs nowrap" style="left:1092.0px;top:556.0px;width:95px;text-align:right;font-size:14px;line-height:17px;font-weight:bold;color:#34495e">Даты</div>
<div class="abs nowrap" style="left:1242.0px;top:556.0px;width:101px;text-align:right;font-size:14px;line-height:17px;font-weight:bold;color:#34495e">Цены</div>
<svg class="abs" style="left:1194.5px;top:558.0px;" width="16" height="15" viewBox="0 0 16 15"><g fill="#7f8a96"><rect x="2.8" y="0" width="2.4" height="10.5"/><path d="M0.7 9.8 L7.1 9.8 L3.9 14Z"/><rect x="8.5" y="0" width="6" height="2"/><rect x="8.5" y="3" width="5" height="2.5"/><rect x="8.5" y="6.5" width="3.5" height="2"/><rect x="8.5" y="10" width="2.5" height="2.5"/></g></svg>
<svg class="abs" style="left:1351.0px;top:558.0px;" width="16" height="15" viewBox="0 0 16 15"><g fill="#d3d6da"><rect x="2" y="0" width="2.8" height="10.5"/><path d="M0 10 L6.9 10 L3.45 14Z"/><rect x="9.2" y="3.5" width="2.7" height="10.5"/><path d="M6.9 4 L14 4 L10.45 0Z"/></g></svg>
<div class="abs" style="left:20.0px;top:584.0px;width:1353.4px;height:49px;background:#f4f4f4"></div>
<div class="abs" style="left:20.0px;top:633.0px;width:1353.4px;height:1px;background:#ddd"></div>
<div class="abs nowrap" style="left:28.5px;top:590.0px;font-size:14px;line-height:17px;color:#3e4856;-webkit-text-stroke:0.2px #f4f4f4"><span style="letter-spacing:-0.85px">PETROVICH.RU</span><span style="margin-left:-1.5px">&nbsp; </span><span style="color:#7c7c7c;letter-spacing:-0.12px">[purmo | 11 500x1000]</span> <b style="color:#34495e;-webkit-text-stroke:0">(3)</b></div>
<div class="abs nowrap" style="left:28.5px;top:610.0px;font-size:14px;line-height:17px;color:#555;-webkit-text-stroke:0.45px #555;letter-spacing:0.12px">Стальной радиатор Purmo Compact тип 11 500x1000 мм</div>
<div class="abs nowrap" style="left:990.0px;top:591.0px;width:41px;height:17px;background:#999;border-radius:1.5px;color:#fff;font-weight:bold;font-size:11px;line-height:17px;text-align:center;letter-spacing:-0.7px">RU-LEN</div>
<div class="abs nowrap" style="left:945.0px;top:591.0px;width:41px;height:17px;background:#999;border-radius:1.5px;color:#fff;font-weight:bold;font-size:11px;line-height:17px;text-align:center;letter-spacing:-0.7px">RU-LEN</div>
<div class="abs nowrap" style="left:900.0px;top:591.0px;width:41px;height:17px;background:#999;border-radius:1.5px;color:#fff;font-weight:bold;font-size:11px;line-height:17px;text-align:center;letter-spacing:-0.7px">RU-LEN</div>
<div class="abs nowrap" style="left:1009.0px;top:591.0px;width:200px;text-align:right;font-size:18px;line-height:21px;color:#777">10.18 12:14</div>
<div class="abs nowrap" style="left:1009.0px;top:615.0px;width:200px;text-align:right;font-size:12.5px;line-height:15px;color:#666;letter-spacing:-0.3px">10.05 19:40 - 10.18 12:14</div>
<div class="abs nowrap" style="left:1165.0px;top:591.0px;width:200px;text-align:right;font-size:18px;line-height:21px;color:#777">3 972</div>
<div class="abs nowrap" style="left:1165.0px;top:615.0px;width:200px;text-align:right;font-size:12.5px;line-height:15px;color:#666;letter-spacing:-0.3px">3 972 - 4 091</div>
<div class="abs" style="left:20.0px;top:634.0px;width:1353.4px;height:49px;background:#fff"></div>
<div class="abs" style="left:20.0px;top:683.0px;width:1353.4px;height:1px;background:#ddd"></div>
<div class="abs nowrap" style="left:28.5px;top:640.0px;font-size:14px;line-height:17px;color:#3e4856;-webkit-text-stroke:0.2px #fff"><span style="letter-spacing:-0.85px">PETROVICH.RU</span><span style="margin-left:-1.5px">&nbsp; </span><b style="color:#34495e;-webkit-text-stroke:0">(4)</b><span style="display:inline-block;vertical-align:1px;margin-left:6px;background:#009688;color:#fff;font-weight:bold;font-size:11.5px;line-height:17px;height:17px;padding:0 4px;letter-spacing:-0.6px">YES</span></div>
<div class="abs nowrap" style="left:28.5px;top:660.0px;font-size:14px;line-height:17px;color:#555;-webkit-text-stroke:0.45px #555;letter-spacing:0.12px">Подбалясенник для балясины 4000 мм 60x60 мм сорт АВ клееный</div>
<div class="abs nowrap" style="left:990.0px;top:641.0px;width:41px;height:17px;background:#999;border-radius:1.5px;color:#fff;font-weight:bold;font-size:11px;line-height:17px;text-align:center;letter-spacing:-0.7px">RU-LEN</div>
<div class="abs nowrap" style="left:951.0px;top:641.0px;width:35px;height:17px;background:#999;border-radius:1.5px;color:#fff;font-weight:bold;font-size:11px;line-height:17px;text-align:center;letter-spacing:-0.7px">RU-KR</div>
<div class="abs nowrap" style="left:906.0px;top:641.0px;width:41px;height:17px;background:#999;border-radius:1.5px;color:#fff;font-weight:bold;font-size:11px;line-height:17px;text-align:center;letter-spacing:-0.7px">RU-LEN</div>
<div class="abs nowrap" style="left:861.0px;top:641.0px;width:41px;height:17px;background:#999;border-radius:1.5px;color:#fff;font-weight:bold;font-size:11px;line-height:17px;text-align:center;letter-spacing:-0.7px">RU-LEN</div>
<div class="abs nowrap" style="left:1009.0px;top:641.0px;width:200px;text-align:right;font-size:18px;line-height:21px;color:#777">10.18 12:10</div>
<div class="abs nowrap" style="left:1009.0px;top:665.0px;width:200px;text-align:right;font-size:12.5px;line-height:15px;color:#666;letter-spacing:-0.3px">10.04 17:23 - 10.18 12:10</div>
<div class="abs nowrap" style="left:1165.0px;top:647.0px;width:200px;text-align:right;font-size:18px;line-height:21px;color:#999">1 023</div>
<div class="abs" style="left:20.0px;top:684.0px;width:1353.4px;height:49px;background:#f4f4f4"></div>
<div class="abs" style="left:20.0px;top:733.0px;width:1353.4px;height:1px;background:#ddd"></div>
<div class="abs nowrap" style="left:28.5px;top:690.0px;font-size:14px;line-height:17px;color:#3e4856;-webkit-text-stroke:0.2px #f4f4f4"><span style="letter-spacing:-0.85px">PETROVICH.RU</span><span style="margin-left:-1.5px">&nbsp; </span><span style="color:#7c7c7c;letter-spacing:-0.12px">[шинглас | ]</span> <b style="color:#34495e;-webkit-text-stroke:0">(3)</b></div>
<div class="abs nowrap" style="left:28.5px;top:710.0px;font-size:14px;line-height:17px;color:#555;-webkit-text-stroke:0.45px #555;letter-spacing:0.12px">Черепица битумная коньково-карнизная ШИНГЛАС цвет алабама 5 кв.м.</div>
<div class="abs nowrap" style="left:996.0px;top:691.0px;width:35px;height:17px;background:#999;border-radius:1.5px;color:#fff;font-weight:bold;font-size:11px;line-height:17px;text-align:center;letter-spacing:-0.7px">RU-KR</div>
<div class="abs nowrap" style="left:951.0px;top:691.0px;width:41px;height:17px;background:#999;border-radius:1.5px;color:#fff;font-weight:bold;font-size:11px;line-height:17px;text-align:center;letter-spacing:-0.7px">RU-LEN</div>
<div class="abs nowrap" style="left:906.0px;top:691.0px;width:41px;height:17px;background:#999;border-radius:1.5px;color:#fff;font-weight:bold;font-size:11px;line-height:17px;text-align:center;letter-spacing:-0.7px">RU-LEN</div>
<div class="abs nowrap" style="left:1009.0px;top:691.0px;width:200px;text-align:right;font-size:18px;line-height:21px;color:#777">10.18 11:58</div>
<div class="abs nowrap" style="left:1009.0px;top:715.0px;width:200px;text-align:right;font-size:12.5px;line-height:15px;color:#666;letter-spacing:-0.3px">10.04 18:00 - 10.18 11:58</div>
<div class="abs nowrap" style="left:1165.0px;top:691.0px;width:200px;text-align:right;font-size:18px;line-height:21px;color:#777">2 579</div>
<div class="abs nowrap" style="left:1165.0px;top:715.0px;width:200px;text-align:right;font-size:12.5px;line-height:15px;color:#666;letter-spacing:-0.3px">2 579 - 2 679</div>
<div class="abs" style="left:20.0px;top:734.0px;width:1353.4px;height:49px;background:#fff"></div>
<div class="abs" style="left:20.0px;top:783.0px;width:1353.4px;height:1px;background:#ddd"></div>
<div class="abs nowrap" style="left:28.5px;top:740.0px;font-size:14px;line-height:17px;color:#3e4856;-webkit-text-stroke:0.2px #fff"><span style="letter-spacing:-0.85px">PETROVICH.RU</span><span style="margin-left:-1.5px">&nbsp; </span><span style="color:#7c7c7c;letter-spacing:-0.12px">[sormat | ]</span> <b style="color:#34495e;-webkit-text-stroke:0">(5)</b><span style="display:inline-block;vertical-align:1px;margin-left:6px;background:#009688;color:#fff;font-weight:bold;font-size:11.5px;line-height:17px;height:17px;padding:0 4px;letter-spacing:-0.6px">YES</span></div>
<div class="abs nowrap" style="left:28.5px;top:760.0px;font-size:14px;line-height:17px;color:#555;-webkit-text-stroke:0.45px #555;letter-spacing:0.12px">Анкер со шпилькой Sormat 10-30 мм PFG/SB (25 шт)</div>
<div class="abs nowrap" style="left:996.0px;top:741.0px;width:35px;height:17px;background:#999;border-radius:1.5px;color:#fff;font-weight:bold;font-size:11px;line-height:17px;text-align:center;letter-spacing:-0.7px">RU-KR</div>
<div class="abs nowrap" style="left:949.0px;top:741.0px;width:43px;height:17px;background:#999;border-radius:1.5px;color:#fff;font-weight:bold;font-size:11px;line-height:17px;text-align:center;letter-spacing:-0.7px">RU-NGR</div>
<div class="abs nowrap" style="left:898.0px;top:741.0px;width:47px;height:17px;background:#999;border-radius:1.5px;color:#fff;font-weight:bold;font-size:11px;line-height:17px;text-align:center;letter-spacing:-0.7px">RU-MOW</div>
<div class="abs nowrap" style="left:853.0px;top:741.0px;width:41px;height:17px;background:#999;border-radius:1.5px;color:#fff;font-weight:bold;font-size:11px;line-height:17px;text-align:center;letter-spacing:-0.7px">RU-LEN</div>
<div class="abs nowrap" style="left:1009.0px;top:741.0px;width:200px;text-align:right;font-size:18px;line-height:21px;color:#777">10.18 11:55</div>
<div class="abs nowrap" style="left:1009.0px;top:765.0px;width:200px;text-align:right;font-size:12.5px;line-height:15px;color:#666;letter-spacing:-0.3px">10.05 00:58 - 10.18 11:55</div>
<div class="abs nowrap" style="left:1165.0px;top:741.0px;width:200px;text-align:right;font-size:18px;line-height:21px;color:#777">3 191</div>
<div class="abs nowrap" style="left:1165.0px;top:765.0px;width:200px;text-align:right;font-size:12.5px;line-height:15px;color:#666;letter-spacing:-0.3px">3 191 - 3 633</div>
<div class="abs" style="left:20.0px;top:784.0px;width:1353.4px;height:49px;background:#f4f4f4"></div>
<div class="abs" style="left:20.0px;top:833.0px;width:1353.4px;height:1px;background:#ddd"></div>
<div class="abs nowrap" style="left:28.5px;top:790.0px;font-size:14px;line-height:17px;color:#3e4856;-webkit-text-stroke:0.2px #f4f4f4"><span style="letter-spacing:-0.85px">PETROVICH.RU</span><span style="margin-left:-1.5px">&nbsp; </span><span style="color:#7c7c7c;letter-spacing:-0.12px">[aura | в/д]</span> <b style="color:#34495e;-webkit-text-stroke:0">(2)</b><span style="display:inline-block;vertical-align:1px;margin-left:6px;background:#009688;color:#fff;font-weight:bold;font-size:11.5px;line-height:17px;height:17px;padding:0 4px;letter-spacing:-0.6px">YES</span></div>
<div class="abs nowrap" style="left:28.5px;top:810.0px;font-size:14px;line-height:17px;color:#555;-webkit-text-stroke:0.45px #555;letter-spacing:0.12px">Краска в/д влагостойкая Interior Aura Fjord основа А 15 л</div>
<div class="abs nowrap" style="left:996.0px;top:791.0px;width:35px;height:17px;background:#999;border-radius:1.5px;color:#fff;font-weight:bold;font-size:11px;line-height:17px;text-align:center;letter-spacing:-0.7px">RU-KR</div>
<div class="abs nowrap" style="left:949.0px;top:791.0px;width:43px;height:17px;background:#999;border-radius:1.5px;color:#fff;font-weight:bold;font-size:11px;line-height:17px;text-align:center;letter-spacing:-0.7px">RU-NGR</div>
<div class="abs nowrap" style="left:1009.0px;top:791.0px;width:200px;text-align:right;font-size:18px;line-height:21px;color:#777">10.18 11:53</div>
<div class="abs nowrap" style="left:1009.0px;top:815.0px;width:200px;text-align:right;font-size:12.5px;line-height:15px;color:#666;letter-spacing:-0.3px">10.05 14:19 - 10.18 11:53</div>
<div class="abs nowrap" style="left:1165.0px;top:791.0px;width:200px;text-align:right;font-size:18px;line-height:21px;color:#777">1 855</div>
<div class="abs nowrap" style="left:1165.0px;top:815.0px;width:200px;text-align:right;font-size:12.5px;line-height:15px;color:#666;letter-spacing:-0.3px">1 855 - 1 913</div>
<div class="abs" style="left:20.0px;top:834.0px;width:1353.4px;height:49px;background:#fff"></div>
<div class="abs" style="left:20.0px;top:883.0px;width:1353.4px;height:1px;background:#ddd"></div>
<div class="abs nowrap" style="left:28.5px;top:840.0px;font-size:14px;line-height:17px;color:#3e4856;-webkit-text-stroke:0.2px #fff"><span style="letter-spacing:-0.85px">PETROVICH.RU</span><span style="margin-left:-1.5px">&nbsp; </span><span style="color:#7c7c7c;letter-spacing:-0.12px">[wellton | 1x12.5 м]</span> <b style="color:#34495e;-webkit-text-stroke:0">(3)</b></div>
<div class="abs nowrap" style="left:28.5px;top:860.0px;font-size:14px;line-height:17px;color:#555;-webkit-text-stroke:0.45px #555;letter-spacing:0.12px">Стеклообои Wellton Decor Тростник 1x12.5 м</div>
<div class="abs nowrap" style="left:990.0px;top:841.0px;width:41px;height:17px;background:#999;border-radius:1.5px;color:#fff;font-weight:bold;font-size:11px;line-height:17px;text-align:center;letter-spacing:-0.7px">RU-LEN</div>
<div class="abs nowrap" style="left:951.0px;top:841.0px;width:35px;height:17px;background:#999;border-radius:1.5px;color:#fff;font-weight:bold;font-size:11px;line-height:17px;text-align:center;letter-spacing:-0.7px">RU-KR</div>
<div class="abs nowrap" style="left:906.0px;top:841.0px;width:41px;height:17px;background:#999;border-radius:1.5px;color:#fff;font-weight:bold;font-size:11px;line-height:17px;text-align:center;letter-spacing:-0.7px">RU-LEN</div>
<div class="abs nowrap" style="left:1009.0px;top:841.0px;width:200px;text-align:right;font-size:18px;line-height:21px;color:#777">10.18 11:52</div>
<div class="abs nowrap" style="left:1009.0px;top:865.0px;width:200px;text-align:right;font-size:12.5px;line-height:15px;color:#666;letter-spacing:-0.3px">10.04 17:10 - 10.18 11:52</div>
<div class="abs nowrap" style="left:1165.0px;top:841.0px;width:200px;text-align:right;font-size:18px;line-height:21px;color:#777">2 336</div>
<div class="abs nowrap" style="left:1165.0px;top:865.0px;width:200px;text-align:right;font-size:12.5px;line-height:15px;color:#666;letter-spacing:-0.3px">2 336 - 2 421</div>
<div class="abs" style="left:20.0px;top:884.0px;width:1353.4px;height:49px;background:#f4f4f4"></div>
<div class="abs" style="left:20.0px;top:933.0px;width:1353.4px;height:1px;background:#ddd"></div>
<div class="abs nowrap" style="left:28.5px;top:890.0px;font-size:14px;line-height:17px;color:#3e4856;-webkit-text-stroke:0.2px #f4f4f4"><span style="letter-spacing:-0.85px">PETROVICH.RU</span><span style="margin-left:-1.5px">&nbsp; </span><span style="color:#7c7c7c;letter-spacing:-0.12px">[einhell | th-ap 650 e]</span> <b style="color:#34495e;-webkit-text-stroke:0">(6)</b><span style="display:inline-block;vertical-align:1px;margin-left:6px;background:#009688;color:#fff;font-weight:bold;font-size:11.5px;line-height:17px;height:17px;padding:0 4px;letter-spacing:-0.6px">YES</span></div>
<div class="abs nowrap" style="left:28.5px;top:910.0px;font-size:14px;line-height:17px;color:#555;-webkit-text-stroke:0.45px #555;letter-spacing:0.12px">Насос садовый Einhell TH-AP 650 E</div>
<div class="abs nowrap" style="left:996.0px;top:891.0px;width:35px;height:17px;background:#999;border-radius:1.5px;color:#fff;font-weight:bold;font-size:11px;line-height:17px;text-align:center;letter-spacing:-0.7px">RU-KR</div>
<div class="abs nowrap" style="left:949.0px;top:891.0px;width:43px;height:17px;background:#999;border-radius:1.5px;color:#fff;font-weight:bold;font-size:11px;line-height:17px;text-align:center;letter-spacing:-0.7px">RU-NGR</div>
<div class="abs nowrap" style="left:898.0px;top:891.0px;width:47px;height:17px;background:#999;border-radius:1.5px;color:#fff;font-weight:bold;font-size:11px;line-height:17px;text-align:center;letter-spacing:-0.7px">RU-MOW</div>
<div class="abs nowrap" style="left:853.0px;top:891.0px;width:41px;height:17px;background:#999;border-radius:1.5px;color:#fff;font-weight:bold;font-size:11px;line-height:17px;text-align:center;letter-spacing:-0.7px">RU-LEN</div>
<div class="abs nowrap" style="left:1009.0px;top:891.0px;width:200px;text-align:right;font-size:18px;line-height:21px;color:#777">10.18 11:51</div>
<div class="abs nowrap" style="left:1009.0px;top:915.0px;width:200px;text-align:right;font-size:12.5px;line-height:15px;color:#666;letter-spacing:-0.3px">10.05 10:00 - 10.18 11:51</div>
<div class="abs nowrap" style="left:1165.0px;top:891.0px;width:200px;text-align:right;font-size:18px;line-height:21px;color:#777">4 399</div>
<div class="abs nowrap" style="left:1165.0px;top:915.0px;width:200px;text-align:right;font-size:12.5px;line-height:15px;color:#666;letter-spacing:-0.3px">4 399 - 4 500</div>
</div>
<div id="side"><div id="sideshadow"></div>
<div class="abs" style="left:15.0px;top:0.0px;width:120px;height:3px;background:#555"></div>
<div class="abs nowrap" style="left:15.0px;top:10.0px;width:120px;text-align:center;font-size:14px;line-height:15px;color:#3e4a5a;-webkit-text-stroke:0.3px #3e4a5a;letter-spacing:0.2px">Бренды<br>0 / 438</div>
<div class="abs nowrap" style="left:135.0px;top:10.0px;width:120px;text-align:center;font-size:14px;line-height:15px;color:#3e4a5a;-webkit-text-stroke:0.3px #3e4a5a;letter-spacing:0.2px">Магазины<br>0 / 1</div>
<div class="abs nowrap" style="left:255.0px;top:10.0px;width:120px;text-align:center;font-size:14px;line-height:15px;color:#3e4a5a;-webkit-text-stroke:0.3px #3e4a5a;letter-spacing:0.2px">Категории<br>0 / 355</div>
<div class="abs nowrap" style="left:375.0px;top:10.0px;width:120px;text-align:center;font-size:14px;line-height:15px;color:#3e4a5a;-webkit-text-stroke:0.3px #3e4a5a;letter-spacing:0.2px">Регионы<br>0 / 13</div>
<div class="abs" style="left:15.0px;top:50.0px;width:470px;height:31px;background:#fff;border-radius:4px;border-bottom:1.5px solid #26a69a"></div>
<div class="abs" style="left:20.0px;top:87.0px;width:22px;height:22px;border:1px solid #ccc;background:#eee"></div>
<div class="abs nowrap" style="left:46.0px;top:86.0px;font-size:16.5px;line-height:20px;color:#bbb">Исключить</div>
<div class="abs nowrap" style="left:28.0px;top:150.0px;font-size:14px;line-height:16px;font-weight:bold;color:#34495e">ИМЯ</div>
<div class="abs nowrap" style="left:195.0px;top:129.0px;width:50px;text-align:right;font-size:14px;line-height:16px;font-weight:bold;color:#34495e">Кол-</div>
<div class="abs nowrap" style="left:199.0px;top:150.0px;width:46px;text-align:right;font-size:14px;line-height:16px;font-weight:bold;color:#34495e">во</div>
<div class="abs nowrap" style="left:299.0px;top:150.0px;width:48px;text-align:right;font-size:14px;line-height:16px;font-weight:bold;color:#34495e">min</div>
<div class="abs nowrap" style="left:399.0px;top:150.0px;width:51px;text-align:right;font-size:14px;line-height:16px;font-weight:bold;color:#34495e">max</div>
<svg class="abs" style="left:170.0px;top:151.0px;" width="16" height="15" viewBox="0 0 16 15"><g fill="#d3d6da"><rect x="2" y="0" width="2.8" height="10.5"/><path d="M0 10 L6.9 10 L3.45 14Z"/><rect x="9.2" y="3.5" width="2.7" height="10.5"/><path d="M6.9 4 L14 4 L10.45 0Z"/></g></svg>
<svg class="abs" style="left:252.5px;top:151.0px;" width="16" height="15" viewBox="0 0 16 15"><g fill="#7f8a96"><rect x="2.8" y="0" width="2.4" height="10.5"/><path d="M0.7 9.8 L7.1 9.8 L3.9 14Z"/><rect x="8.5" y="0" width="6" height="2"/><rect x="8.5" y="3" width="5" height="2.5"/><rect x="8.5" y="6.5" width="3.5" height="2"/><rect x="8.5" y="10" width="2.5" height="2.5"/></g></svg>
<svg class="abs" style="left:355.0px;top:151.0px;" width="16" height="15" viewBox="0 0 16 15"><g fill="#d3d6da"><rect x="2" y="0" width="2.8" height="10.5"/><path d="M0 10 L6.9 10 L3.45 14Z"/><rect x="9.2" y="3.5" width="2.7" height="10.5"/><path d="M6.9 4 L14 4 L10.45 0Z"/></g></svg>
<svg class="abs" style="left:458.0px;top:151.0px;" width="16" height="15" viewBox="0 0 16 15"><g fill="#d3d6da"><rect x="2" y="0" width="2.8" height="10.5"/><path d="M0 10 L6.9 10 L3.45 14Z"/><rect x="9.2" y="3.5" width="2.7" height="10.5"/><path d="M6.9 4 L14 4 L10.45 0Z"/></g></svg>
<div class="abs" style="left:20.0px;top:176.0px;width:460px;height:1.5px;background:#ddd"></div>
<div class="abs" style="left:20.0px;top:177.0px;width:460px;height:37px;background:#f5f5f5"></div>
<div class="abs" style="left:20.0px;top:213.0px;width:460px;height:1px;background:#ddd"></div>
<div class="abs nowrap" style="left:28.0px;top:186.0px;font-size:14px;line-height:17px;color:#3e4a5a;letter-spacing:-1.58px;-webkit-text-stroke:0.35px #f5f5f5">_UNKN_</div>
<div class="abs nowrap" style="left:167.0px;top:186.0px;width:100px;text-align:right;font-size:14px;line-height:17px;font-weight:bold;color:#3e4a5a">665</div>
<div class="abs nowrap" style="left:269.0px;top:186.0px;width:100px;text-align:right;font-size:14px;line-height:17px;color:#3e4a5a">1 000.00</div>
<div class="abs nowrap" style="left:372.0px;top:186.0px;width:100px;text-align:right;font-size:14px;line-height:17px;color:#3e4a5a">38 850.00</div>
<div class="abs" style="left:20.0px;top:250.0px;width:460px;height:1px;background:#ddd"></div>
<div class="abs nowrap" style="left:28.0px;top:223.0px;font-size:14px;line-height:17px;color:#3e4a5a;letter-spacing:-1.17px;-webkit-text-stroke:0.35px #eee">BOSCH</div>
<div class="abs nowrap" style="left:167.0px;top:223.0px;width:100px;text-align:right;font-size:14px;line-height:17px;font-weight:bold;color:#3e4a5a">103</div>
<div class="abs nowrap" style="left:269.0px;top:223.0px;width:100px;text-align:right;font-size:14px;line-height:17px;color:#3e4a5a">1 007.00</div>
<div class="abs nowrap" style="left:372.0px;top:223.0px;width:100px;text-align:right;font-size:14px;line-height:17px;color:#3e4a5a">66 312.00</div>
<div class="abs" style="left:20.0px;top:251.0px;width:460px;height:37px;background:#f5f5f5"></div>
<div class="abs" style="left:20.0px;top:287.0px;width:460px;height:1px;background:#ddd"></div>
<div class="abs nowrap" style="left:28.0px;top:260.0px;font-size:14px;line-height:17px;color:#3e4a5a;letter-spacing:-1.02px;-webkit-text-stroke:0.35px #f5f5f5">SORMAT</div>
<div class="abs nowrap" style="left:167.0px;top:260.0px;width:100px;text-align:right;font-size:14px;line-height:17px;font-weight:bold;color:#3e4a5a">78</div>
<div class="abs nowrap" style="left:269.0px;top:260.0px;width:100px;text-align:right;font-size:14px;line-height:17px;color:#3e4a5a">1 001.00</div>
<div class="abs nowrap" style="left:372.0px;top:260.0px;width:100px;text-align:right;font-size:14px;line-height:17px;color:#3e4a5a">6 950.00</div>
<div class="abs" style="left:20.0px;top:324.0px;width:460px;height:1px;background:#ddd"></div>
<div class="abs nowrap" style="left:28.0px;top:297.0px;font-size:14px;line-height:17px;color:#3e4a5a;letter-spacing:-0.3px;-webkit-text-stroke:0.35px #eee">ПРАКТИКА</div>
<div class="abs nowrap" style="left:167.0px;top:297.0px;width:100px;text-align:right;font-size:14px;line-height:17px;font-weight:bold;color:#3e4a5a">70</div>
<div class="abs nowrap" style="left:269.0px;top:297.0px;width:100px;text-align:right;font-size:14px;line-height:17px;color:#3e4a5a">1 014.00</div>
<div class="abs nowrap" style="left:372.0px;top:297.0px;width:100px;text-align:right;font-size:14px;line-height:17px;color:#3e4a5a">15 551.00</div>
<div class="abs" style="left:20.0px;top:325.0px;width:460px;height:37px;background:#f5f5f5"></div>
<div class="abs" style="left:20.0px;top:361.0px;width:460px;height:1px;background:#ddd"></div>
<div class="abs nowrap" style="left:28.0px;top:334.0px;font-size:14px;line-height:17px;color:#3e4a5a;letter-spacing:-0.38px;-webkit-text-stroke:0.35px #f5f5f5">MAKITA</div>
<div class="abs nowrap" style="left:167.0px;top:334.0px;width:100px;text-align:right;font-size:14px;line-height:17px;font-weight:bold;color:#3e4a5a">65</div>
<div class="abs nowrap" style="left:269.0px;top:334.0px;width:100px;text-align:right;font-size:14px;line-height:17px;color:#3e4a5a">2 889.00</div>
<div class="abs nowrap" style="left:372.0px;top:334.0px;width:100px;text-align:right;font-size:14px;line-height:17px;color:#3e4a5a">54 199.00</div>
<div class="abs" style="left:20.0px;top:398.0px;width:460px;height:1px;background:#ddd"></div>
<div class="abs nowrap" style="left:28.0px;top:371.0px;font-size:14px;line-height:17px;color:#3e4a5a;letter-spacing:-1.03px;-webkit-text-stroke:0.35px #eee">RAWLPLUG</div>
<div class="abs nowrap" style="left:167.0px;top:371.0px;width:100px;text-align:right;font-size:14px;line-height:17px;font-weight:bold;color:#3e4a5a">44</div>
<div class="abs nowrap" style="left:269.0px;top:371.0px;width:100px;text-align:right;font-size:14px;line-height:17px;color:#3e4a5a">1 052.00</div>
<div class="abs nowrap" style="left:372.0px;top:371.0px;width:100px;text-align:right;font-size:14px;line-height:17px;color:#3e4a5a">4 347.00</div>
<div class="abs" style="left:20.0px;top:399.0px;width:460px;height:37px;background:#f5f5f5"></div>
<div class="abs" style="left:20.0px;top:435.0px;width:460px;height:1px;background:#ddd"></div>
<div class="abs nowrap" style="left:28.0px;top:408.0px;font-size:14px;line-height:17px;color:#3e4a5a;letter-spacing:-1.43px;-webkit-text-stroke:0.35px #f5f5f5">РОСТ</div>
<div class="abs nowrap" style="left:167.0px;top:408.0px;width:100px;text-align:right;font-size:14px;line-height:17px;font-weight:bold;color:#3e4a5a">36</div>
<div class="abs nowrap" style="left:269.0px;top:408.0px;width:100px;text-align:right;font-size:14px;line-height:17px;color:#3e4a5a">1 330.00</div>
<div class="abs nowrap" style="left:372.0px;top:408.0px;width:100px;text-align:right;font-size:14px;line-height:17px;color:#3e4a5a">5 382.00</div>
<div class="abs" style="left:20.0px;top:472.0px;width:460px;height:1px;background:#ddd"></div>
<div class="abs nowrap" style="left:28.0px;top:445.0px;font-size:14px;line-height:17px;color:#3e4a5a;letter-spacing:-0.22px;-webkit-text-stroke:0.35px #eee">КАЛИБР</div>
<div class="abs nowrap" style="left:167.0px;top:445.0px;width:100px;text-align:right;font-size:14px;line-height:17px;font-weight:bold;color:#3e4a5a">33</div>
<div class="abs nowrap" style="left:269.0px;top:445.0px;width:100px;text-align:right;font-size:14px;line-height:17px;color:#3e4a5a">1 047.00</div>
<div class="abs nowrap" style="left:372.0px;top:445.0px;width:100px;text-align:right;font-size:14px;line-height:17px;color:#3e4a5a">31 500.00</div>
<div class="abs" style="left:20.0px;top:473.0px;width:460px;height:37px;background:#f5f5f5"></div>
<div class="abs" style="left:20.0px;top:509.0px;width:460px;height:1px;background:#ddd"></div>
<div class="abs nowrap" style="left:28.0px;top:482.0px;font-size:14px;line-height:17px;color:#3e4a5a;letter-spacing:-0.8px;-webkit-text-stroke:0.35px #f5f5f5">THERMO</div>
<div class="abs nowrap" style="left:167.0px;top:482.0px;width:100px;text-align:right;font-size:14px;line-height:17px;font-weight:bold;color:#3e4a5a">32</div>
<div class="abs nowrap" style="left:269.0px;top:482.0px;width:100px;text-align:right;font-size:14px;line-height:17px;color:#3e4a5a">1 049.00</div>
<div class="abs nowrap" style="left:372.0px;top:482.0px;width:100px;text-align:right;font-size:14px;line-height:17px;color:#3e4a5a">26 944.00</div>
<div class="abs nowrap" style="left:28.0px;top:519.0px;font-size:14px;line-height:17px;color:#3e4a5a;letter-spacing:-0.89px;-webkit-text-stroke:0.35px #eee">EINHELL</div>
<div class="abs nowrap" style="left:167.0px;top:519.0px;width:100px;text-align:right;font-size:14px;line-height:17px;font-weight:bold;color:#3e4a5a">29</div>
<div class="abs nowrap" style="left:269.0px;top:519.0px;width:100px;text-align:right;font-size:14px;line-height:17px;color:#3e4a5a">2 479.00</div>
<div class="abs nowrap" style="left:372.0px;top:519.0px;width:100px;text-align:right;font-size:14px;line-height:17px;color:#3e4a5a">39 990.00</div>
<div class="abs" style="left:171.6px;top:554.4px;width:307.7px;height:33px;border:1px solid #ddd;border-radius:4px;background:#fff"></div>
<div class="abs nowrap" style="left:171.6px;top:554.4px;width:31.4px;height:33px;color:#777;font-size:15px;line-height:33px;text-align:center">&lt;</div>
<div class="abs nowrap" style="left:203.0px;top:554.4px;width:34.0px;height:33px;background:#337ab7;color:#fff;font-size:15px;line-height:33px;text-align:center">1</div>
<div class="abs nowrap" style="left:237.0px;top:554.4px;width:32.5px;height:33px;border-left:1px solid #ddd;color:#337ab7;font-size:15px;line-height:33px;text-align:center">2</div>
<div class="abs nowrap" style="left:269.5px;top:554.4px;width:33.0px;height:33px;border-left:1px solid #ddd;color:#337ab7;font-size:15px;line-height:33px;text-align:center">3</div>
<div class="abs nowrap" style="left:302.5px;top:554.4px;width:32.1px;height:33px;border-left:1px solid #ddd;color:#337ab7;font-size:15px;line-height:33px;text-align:center">4</div>
<div class="abs nowrap" style="left:334.6px;top:554.4px;width:33.0px;height:33px;border-left:1px solid #ddd;color:#337ab7;font-size:15px;line-height:33px;text-align:center">5</div>
<div class="abs nowrap" style="left:367.6px;top:554.4px;width:39.1px;height:33px;border-left:1px solid #ddd;color:#777;font-size:15px;line-height:33px;text-align:center">…</div>
<div class="abs nowrap" style="left:406.7px;top:554.4px;width:40.7px;height:33px;border-left:1px solid #ddd;color:#337ab7;font-size:15px;line-height:33px;text-align:center">44</div>
<div class="abs nowrap" style="left:447.4px;top:554.4px;width:31.9px;height:33px;border-left:1px solid #ddd;color:#337ab7;font-size:15px;line-height:33px;text-align:center">&gt;</div>
<div class="abs nowrap" style="left:150.0px;top:604.0px;width:200px;text-align:center;font-size:18px;line-height:21px;color:#333;letter-spacing:0.6px">Соотношение</div>
<svg class="abs" style="left:0;top:0" width="490" height="908" viewBox="0 0 490 908">
<path d="M250 776.5 L250.00 659.50 A117 117 0 1 1 196.39 880.49 Z" fill="#7cb5ec" stroke="#fff" stroke-width="1" stroke-linejoin="round"/>
<path d="M250 776.5 L196.39 880.49 A117 117 0 0 1 149.32 836.10 Z" fill="#434348" stroke="#fff" stroke-width="1" stroke-linejoin="round"/>
<path d="M250 776.5 L149.32 836.10 A117 117 0 0 1 133.71 789.36 Z" fill="#90ed7d" stroke="#fff" stroke-width="1" stroke-linejoin="round"/>
<path d="M250 776.5 L133.71 789.36 A117 117 0 0 1 137.26 745.22 Z" fill="#f7a35c" stroke="#fff" stroke-width="1" stroke-linejoin="round"/>
<path d="M250 776.5 L137.26 745.22 A117 117 0 0 1 155.07 708.12 Z" fill="#8085e9" stroke="#fff" stroke-width="1" stroke-linejoin="round"/>
<path d="M250 776.5 L155.07 708.12 A117 117 0 0 1 173.98 687.56 Z" fill="#f15c80" stroke="#fff" stroke-width="1" stroke-linejoin="round"/>
<path d="M250 776.5 L173.98 687.56 A117 117 0 0 1 192.74 674.47 Z" fill="#e4d354" stroke="#fff" stroke-width="1" stroke-linejoin="round"/>
<path d="M250 776.5 L192.74 674.47 A117 117 0 0 1 211.88 665.88 Z" fill="#2b908f" stroke="#fff" stroke-width="1" stroke-linejoin="round"/>
<path d="M250 776.5 L211.88 665.88 A117 117 0 0 1 231.62 660.95 Z" fill="#f45b5b" stroke="#fff" stroke-width="1" stroke-linejoin="round"/>
<path d="M250 776.5 L231.62 660.95 A117 117 0 0 1 250.00 659.50 Z" fill="#91e8e1" stroke="#fff" stroke-width="1" stroke-linejoin="round"/>
</svg>
</div>
</body></html>
